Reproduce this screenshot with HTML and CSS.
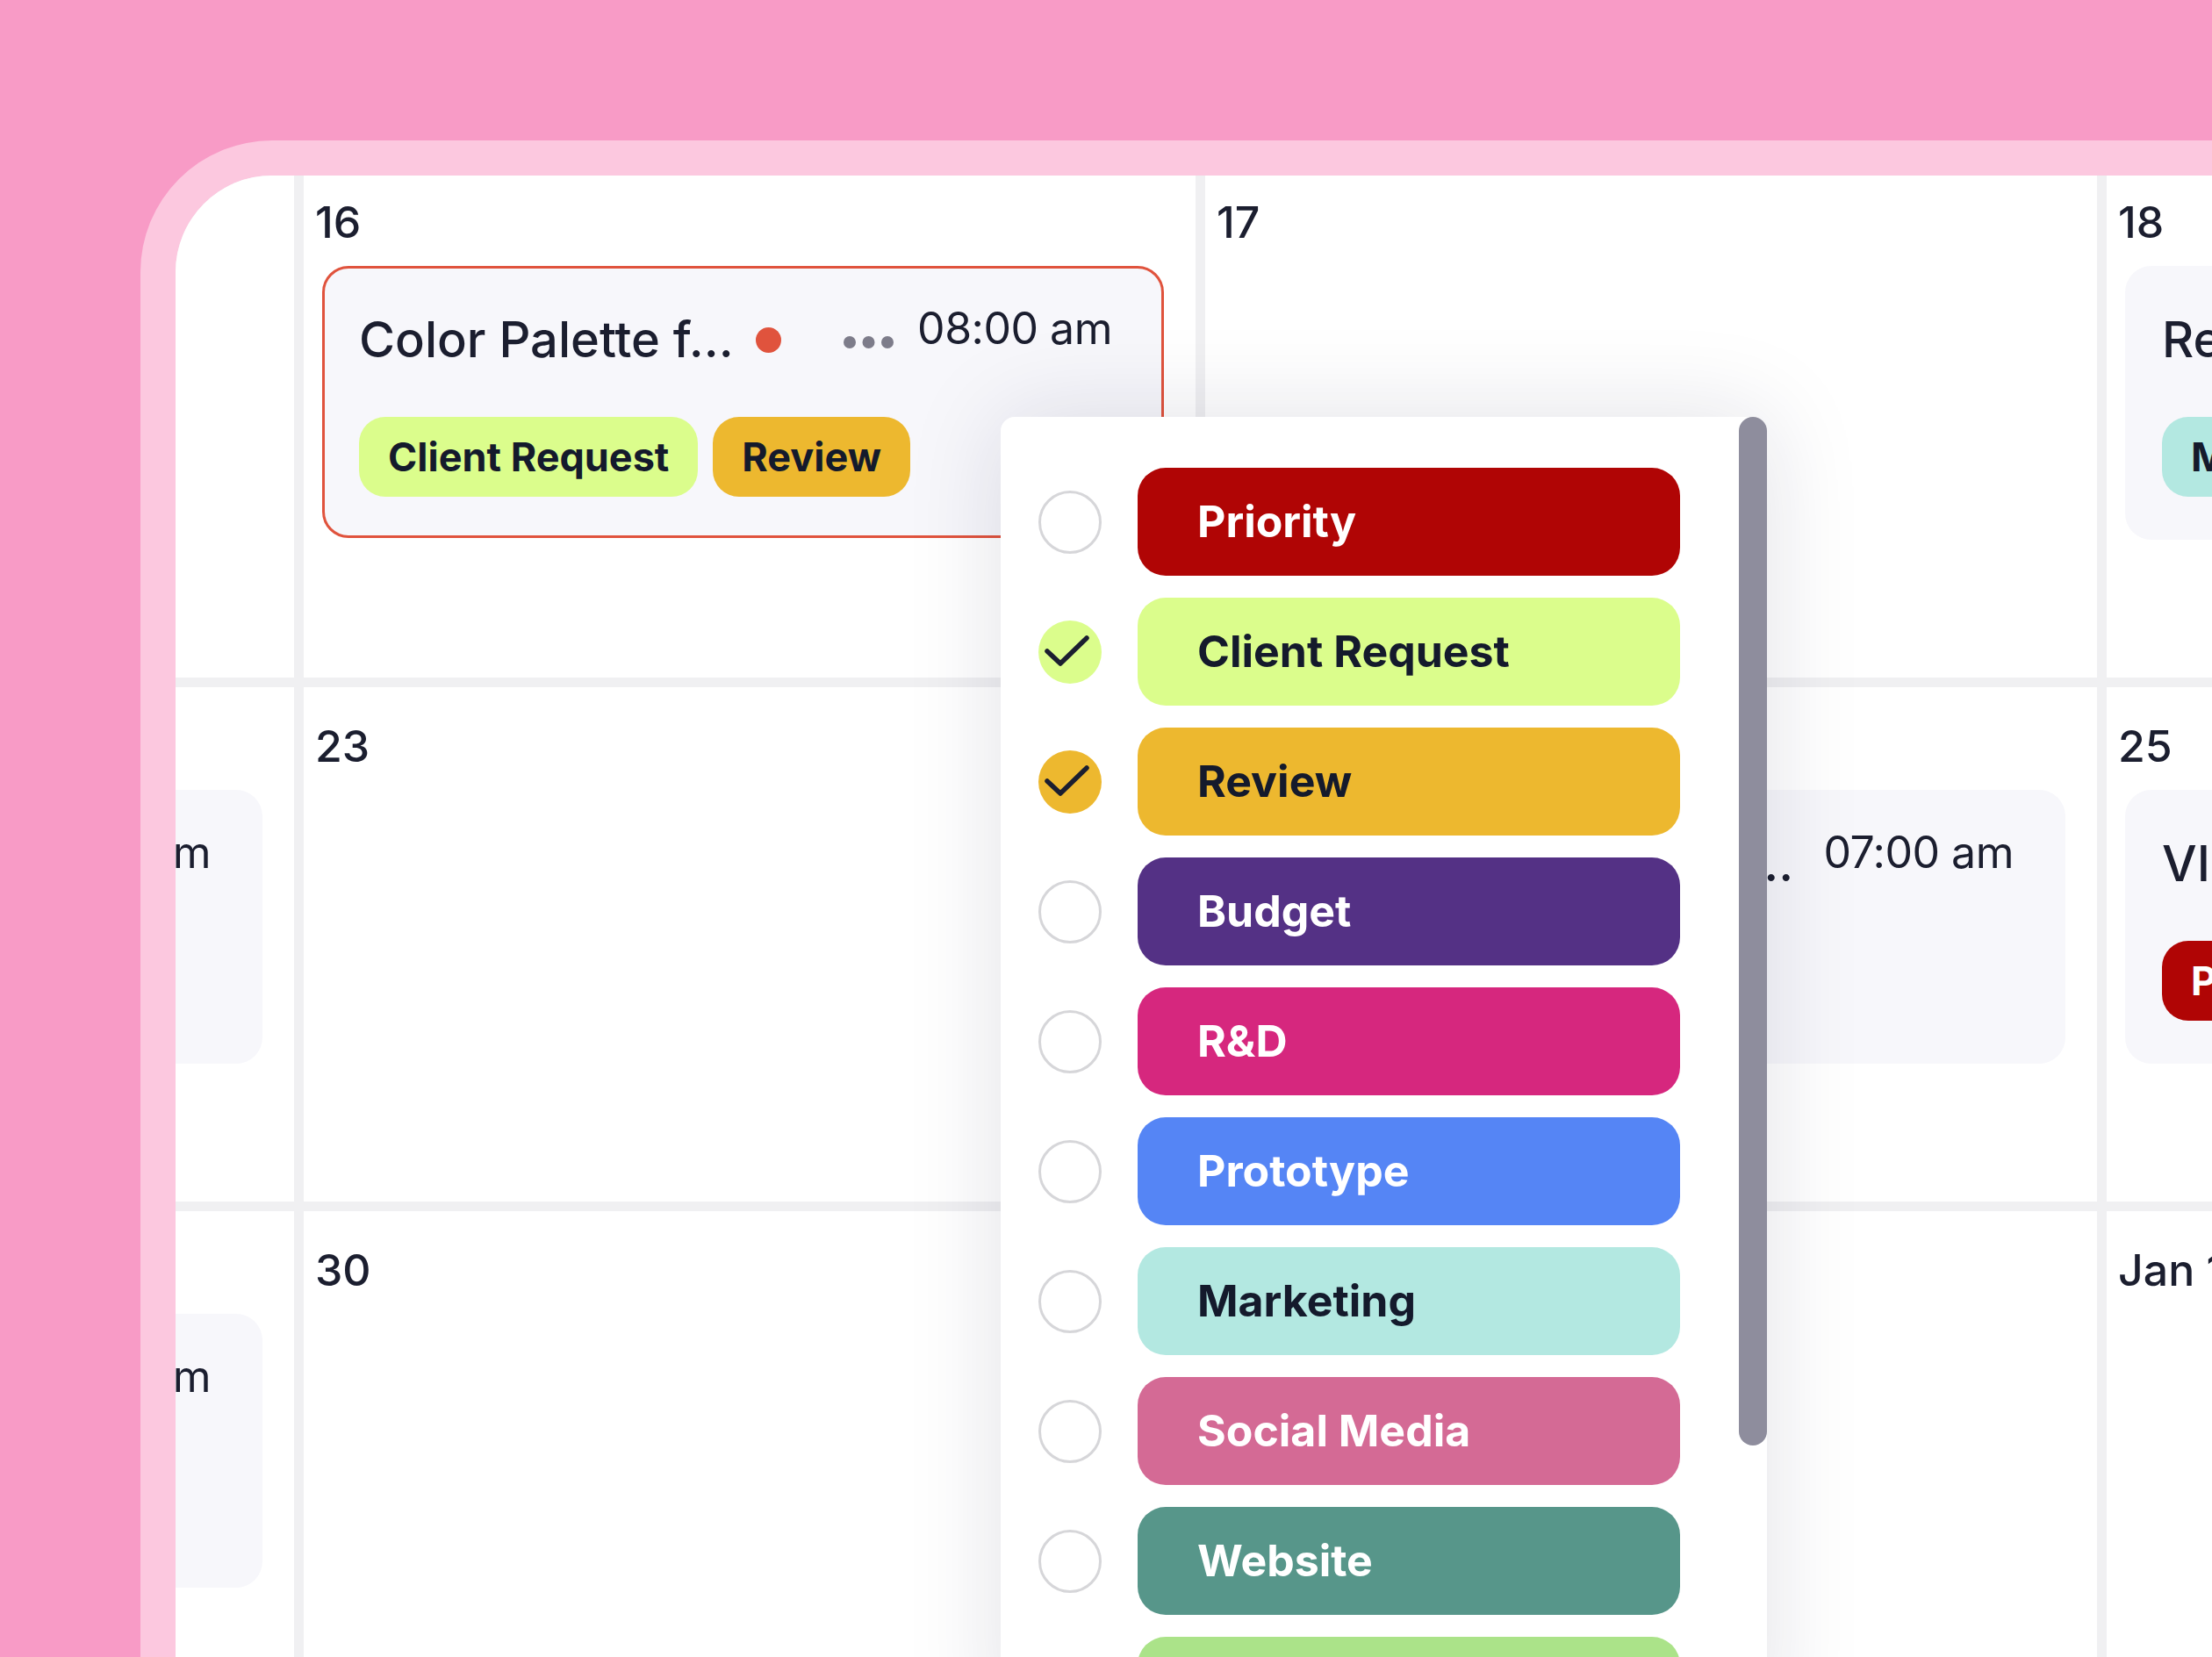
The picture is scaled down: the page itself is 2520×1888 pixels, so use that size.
FILE: index.html
```html
<!DOCTYPE html>
<html lang="en">
<head>
<meta charset="utf-8">
<title>Calendar – Tag picker</title>
<link rel="stylesheet" href="styles.css">
</head>
<body>
<div class="page">
  <div class="frame">
    <div class="screen">
      <div class="calendar">
        <!-- Row 1 -->
        <div class="cell"><div class="date">15</div></div>
        <div class="cell">
          <div class="date">16</div>
          <div class="event selected">
            <div class="event-head">
              <span class="event-title">Color Palette f…</span>
              <span class="status-dot"></span>
              <span class="spacer"></span>
              <svg class="more" width="57" height="14" viewBox="0 0 57 14"><circle cx="7" cy="7" r="7"/><circle cx="28.5" cy="7" r="7"/><circle cx="50" cy="7" r="7"/></svg>
              <span class="event-time">08:00 am</span>
            </div>
            <div class="event-tags">
              <span class="tag tag-client">Client Request</span>
              <span class="tag tag-review">Review</span>
            </div>
          </div>
        </div>
        <div class="cell"><div class="date">17</div></div>
        <div class="cell">
          <div class="date">18</div>
          <div class="event">
            <div class="event-head">
              <span class="event-title fill">Research Phase Kickoff</span>
              <span class="event-time">10:00 am</span>
            </div>
            <div class="event-tags">
              <span class="tag tag-marketing">Marketing</span>
            </div>
          </div>
        </div>

        <!-- Row 2 -->
        <div class="cell">
          <div class="date">22</div>
          <div class="event">
            <div class="event-head">
              <span class="event-title fill">Sprint Planning Session</span>
              <span class="event-time">07:00 am</span>
            </div>
          </div>
        </div>
        <div class="cell"><div class="date">23</div></div>
        <div class="cell">
          <div class="date">24</div>
          <div class="event">
            <div class="event-head">
              <span class="event-title fill">Wireframe Review for Mobile App</span>
              <span class="event-time">07:00 am</span>
            </div>
          </div>
        </div>
        <div class="cell">
          <div class="date">25</div>
          <div class="event">
            <div class="event-head">
              <span class="event-title fill">VIP Client Call</span>
              <span class="event-time">11:00 am</span>
            </div>
            <div class="event-tags">
              <span class="tag tag-priority">Priority</span>
            </div>
          </div>
        </div>

        <!-- Row 3 -->
        <div class="cell">
          <div class="date">29</div>
          <div class="event">
            <div class="event-head">
              <span class="event-title fill">Sprint Planning Session</span>
              <span class="event-time">07:00 am</span>
            </div>
          </div>
        </div>
        <div class="cell"><div class="date">30</div></div>
        <div class="cell"><div class="date">31</div></div>
        <div class="cell"><div class="date">Jan 1</div></div>
      </div>

      <div class="tag-menu">
        <ul class="tag-list">
          <li class="tag-row">
            <span class="check"></span>
            <span class="menu-tag c-priority">Priority</span>
          </li>
          <li class="tag-row">
            <span class="check on c-client"><svg viewBox="0 0 72 72" width="72" height="72"><path d="M10 35 L25 49 L55 20"/></svg></span>
            <span class="menu-tag c-client">Client Request</span>
          </li>
          <li class="tag-row">
            <span class="check on c-review"><svg viewBox="0 0 72 72" width="72" height="72"><path d="M10 35 L25 49 L55 20"/></svg></span>
            <span class="menu-tag c-review">Review</span>
          </li>
          <li class="tag-row">
            <span class="check"></span>
            <span class="menu-tag c-budget">Budget</span>
          </li>
          <li class="tag-row">
            <span class="check"></span>
            <span class="menu-tag c-rnd">R&amp;D</span>
          </li>
          <li class="tag-row">
            <span class="check"></span>
            <span class="menu-tag c-prototype">Prototype</span>
          </li>
          <li class="tag-row">
            <span class="check"></span>
            <span class="menu-tag c-marketing">Marketing</span>
          </li>
          <li class="tag-row">
            <span class="check"></span>
            <span class="menu-tag c-social">Social Media</span>
          </li>
          <li class="tag-row">
            <span class="check"></span>
            <span class="menu-tag c-website">Website</span>
          </li>
          <li class="tag-row">
            <span class="check"></span>
            <span class="menu-tag c-design">Design</span>
          </li>
        </ul>
        <div class="scroll-thumb"></div>
      </div>
    </div>
  </div>
</div>
</body>
</html>
```

FILE: styles.css
```css
* { box-sizing: border-box; }

html, body {
  margin: 0;
  padding: 0;
}

body {
  background: #f89bc6;
  font-family: Inter, "Noto Sans", "Liberation Sans", sans-serif;
  color: #1b1e2f;
  overflow: hidden;
}

.page {
  width: 2520px;
  height: 1888px;
  overflow: hidden;
  padding: 160px 0 0 160px;
}

.frame {
  width: 2360px;
  height: 1728px;
  background: #fcc8df;
  border-top-left-radius: 150px;
  padding: 40px 0 0 40px;
}

.screen {
  position: relative;
  width: 2320px;
  height: 1688px;
  background: #ffffff;
  border-top-left-radius: 110px;
  overflow: hidden;
}

/* Calendar grid (scrolled horizontally / vertically) */
.calendar {
  display: grid;
  grid-template-columns: repeat(4, 1016px);
  grid-auto-rows: 586px;
  gap: 11px;
  background: #f0f0f2;
  width: 4097px;
  margin: -14px 0 0 -881px;
}

.cell {
  background: #ffffff;
  padding: 37px 0 0 13px;
  overflow: hidden;
}

.date {
  font-size: 50px;
  line-height: 60px;
  font-weight: 500;
  color: #1b1e2f;
  white-space: nowrap;
}

.event {
  margin: 20px 36px 0 8px;
  background: #f7f7fb;
  border: 3px solid transparent;
  border-radius: 30px;
  padding: 48px 56px 44px 39px;
  min-height: 312px;
}

.event.selected {
  border-color: #e0533d;
  min-height: 0;
}

.event-head {
  display: flex;
  align-items: flex-start;
  height: 67px;
}

.event-title {
  font-size: 56px;
  line-height: 67px;
  font-weight: 500;
  white-space: nowrap;
  color: #1b1e2f;
}

.event-title.fill {
  flex: 1;
  min-width: 0;
  overflow: hidden;
  text-overflow: ellipsis;
  margin-right: 31px;
}

.status-dot {
  width: 29px;
  height: 29px;
  border-radius: 50%;
  background: #e0533d;
  margin-left: 25px;
  align-self: center;
  flex: none;
}

.spacer { flex: 1; }

.more {
  fill: #7d7c8a;
  align-self: center;
  margin-top: 5px;
  flex: none;
}

.event-time {
  font-size: 50px;
  line-height: 60px;
  font-weight: 400;
  letter-spacing: -0.5px;
  margin-top: -10px;
  margin-left: 27px;
  white-space: nowrap;
  flex: none;
  color: #1b1e2f;
}

.event-title.fill + .event-time { margin-left: 0; }

.event-tags {
  display: flex;
  gap: 17px;
  margin-top: 54px;
}

.tag {
  height: 91px;
  line-height: 91px;
  padding: 0 33px;
  border-radius: 30px;
  font-size: 45px;
  font-weight: 700;
  color: #141a2c;
  white-space: nowrap;
}

.tag-client { background: #dbfd8c; }
.tag-review { background: #edb82f; }
.tag-marketing { background: #b3e8e1; }
.tag-priority { background: #b00505; color: #ffffff; }

/* Tag picker dropdown */
.tag-menu {
  position: absolute;
  left: 940px;
  top: 275px;
  width: 873px;
  height: 1500px;
  background: #ffffff;
  border-radius: 16px 16px 0 0;
  box-shadow: 0 0 110px rgba(25, 25, 60, 0.13);
}

.tag-list {
  list-style: none;
  margin: 0;
  padding: 58px 0 0 43px;
  display: flex;
  flex-direction: column;
  gap: 25px;
}

.tag-row {
  display: flex;
  align-items: center;
  gap: 41px;
}

.check {
  width: 72px;
  height: 72px;
  border-radius: 50%;
  border: 3px solid #d6d6d9;
  flex: none;
  display: flex;
}

.check.on {
  border: none;
}

.check svg {
  fill: none;
  stroke: #1b1e30;
  stroke-width: 5.5;
  stroke-linecap: round;
  stroke-linejoin: round;
}

.menu-tag {
  width: 618px;
  height: 123px;
  line-height: 123px;
  border-radius: 32px;
  padding-left: 68px;
  font-size: 50px;
  font-weight: 700;
  color: #ffffff;
  white-space: nowrap;
}

.c-priority { background: #b00505; }
.c-client { background: #dbfd8c; color: #141a2c; }
.c-review { background: #edb82f; color: #141a2c; }
.c-budget { background: #543185; }
.c-rnd { background: #d6277e; }
.c-prototype { background: #5585f5; }
.c-marketing { background: #b3e8e1; color: #141a2c; }
.c-social { background: #d46a95; }
.c-website { background: #57968a; }
.c-design { background: #abe389; color: #141a2c; }

.scroll-thumb {
  position: absolute;
  top: 0;
  right: 0;
  width: 32px;
  height: 1172px;
  border-radius: 16px;
  background: #8e8d9d;
}
```
